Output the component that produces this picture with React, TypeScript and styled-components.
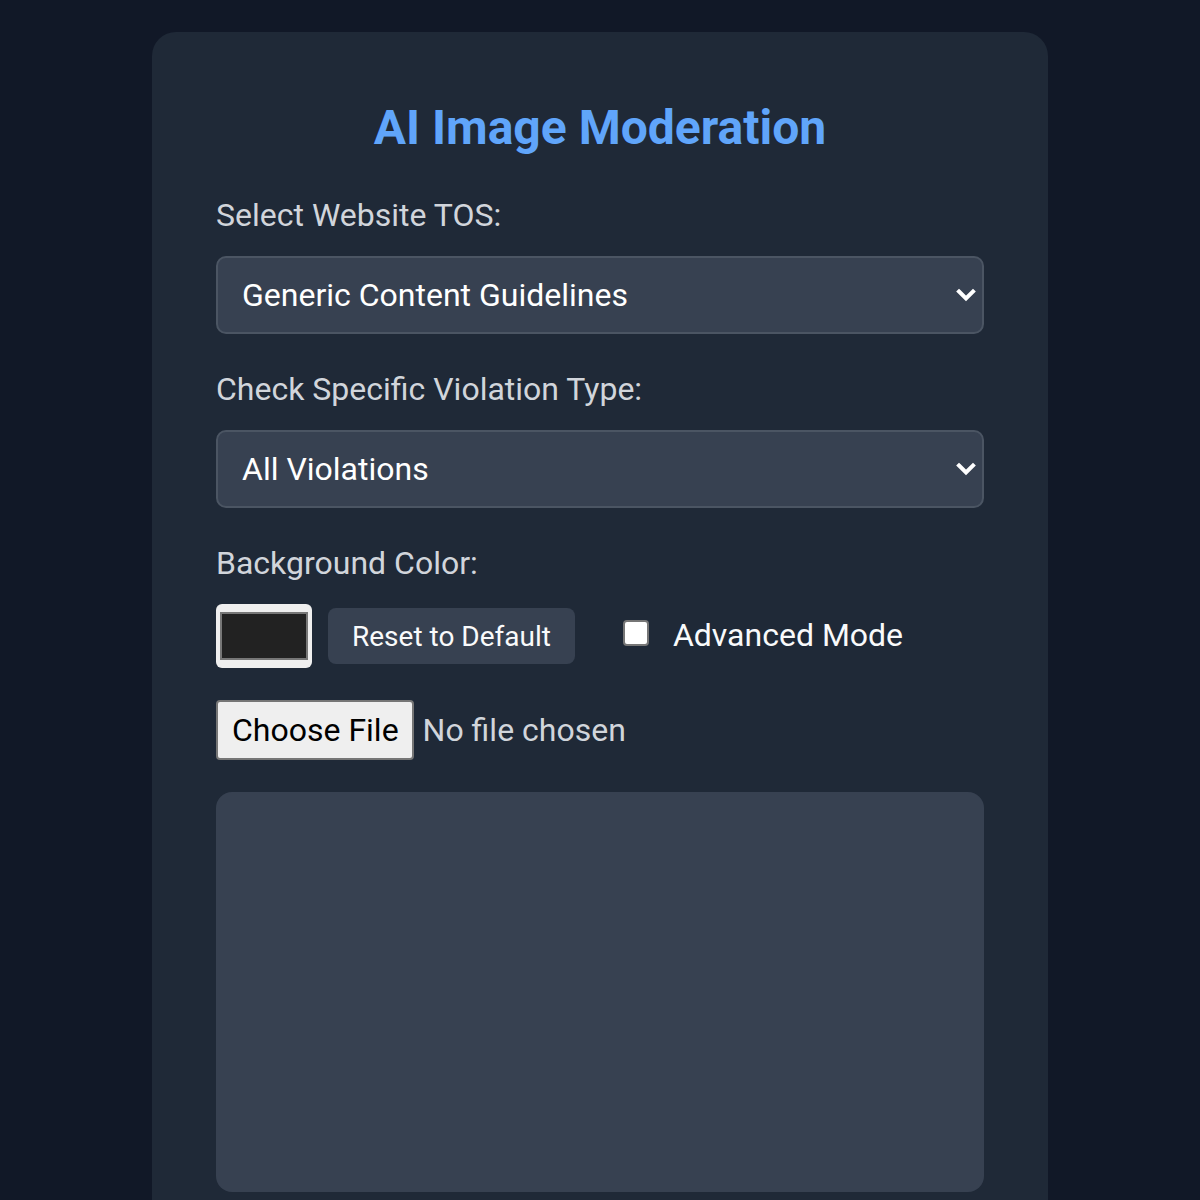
import React, { useState } from "react";
import styled, { createGlobalStyle } from "styled-components";

const GlobalStyle = createGlobalStyle`
  html, body {
    margin: 0;
    padding: 0;
    background: #111827;
  }
  body {
    font-family: Roboto, "Liberation Sans", Arial, sans-serif;
    -webkit-font-smoothing: antialiased;
  }
  *, *::before, *::after {
    box-sizing: border-box;
  }
`;

const Page = styled.main`
  min-height: 100vh;
  padding: 32px 0;
  display: flex;
  justify-content: center;
  align-items: flex-start;
  background: #111827;
`;

const Card = styled.section`
  width: 896px;
  background: #1f2937;
  border-radius: 24px;
  padding: 64px;
  display: flex;
  flex-direction: column;
`;

const Title = styled.h1`
  margin: 0 0 32px;
  font-size: 48px;
  line-height: 64px;
  font-weight: 700;
  color: #60a5fa;
  text-align: center;
`;

const Field = styled.div`
  display: flex;
  flex-direction: column;
  margin-bottom: 32px;
`;

const Label = styled.label`
  font-size: 32px;
  line-height: 48px;
  color: #d1d5db;
  margin: -1px 0 17px;
`;

const SelectWrap = styled.div`
  position: relative;
`;

const Select = styled.select`
  appearance: none;
  -webkit-appearance: none;
  width: 100%;
  height: 78px;
  padding: 0 64px 0 24px;
  background: #374151;
  border: 2px solid #4b5563;
  border-radius: 10px;
  color: #ffffff;
  font-family: inherit;
  font-size: 32px;
  outline: none;
`;

const Chevron = styled.svg`
  position: absolute;
  right: 8px;
  top: 50%;
  transform: translateY(-50%);
  pointer-events: none;
`;

const ControlRow = styled.div`
  display: flex;
  align-items: center;
  gap: 16px;
`;

const ColorInput = styled.input`
  -webkit-appearance: none;
  appearance: none;
  width: 96px;
  height: 64px;
  margin: 0;
  padding: 0;
  border: none;
  border-radius: 6px;
  background: #efefef;
  cursor: pointer;

  &::-webkit-color-swatch-wrapper {
    padding: 8px 4px;
  }
  &::-webkit-color-swatch {
    border: 2px solid #777777;
    border-radius: 0;
  }
`;

const ResetButton = styled.button`
  height: 56px;
  padding: 0 24px;
  border: none;
  border-radius: 8px;
  background: #374151;
  color: #f9fafb;
  font-family: inherit;
  font-size: 28px;
  cursor: pointer;
`;

const CheckLabel = styled.label`
  display: flex;
  align-items: center;
  gap: 24px;
  margin-left: 32px;
  font-size: 32px;
  line-height: 48px;
  color: #f9fafb;
  margin-bottom: 2px;
`;

const Checkbox = styled.input`
  -webkit-appearance: none;
  appearance: none;
  width: 26px;
  height: 26px;
  margin: 0 0 4px;
  border: 2px solid #767676;
  border-radius: 4px;
  background: #ffffff;
`;

const FileRow = styled.div`
  display: flex;
  align-items: center;
  gap: 9px;
  margin-bottom: 32px;
`;

const FileButton = styled.label`
  display: inline-flex;
  align-items: center;
  height: 60px;
  padding: 0 13px 0 14px;
  background: #efefef;
  border: 2px solid #767676;
  border-radius: 4px;
  color: #000000;
  font-size: 32px;
  cursor: pointer;
`;

const HiddenFile = styled.input`
  display: none;
`;

const FileName = styled.span`
  font-size: 32px;
  color: #d1d5db;
`;

const Preview = styled.div`
  height: 400px;
  border-radius: 16px;
  background: #374151;
`;

const ChevronIcon = () => (
  <Chevron width="20" height="14" viewBox="0 0 20 14" aria-hidden="true">
    <polyline
      points="3,3.5 10,10.5 17,3.5"
      fill="none"
      stroke="#ffffff"
      strokeWidth="4"
      strokeLinecap="square"
      strokeLinejoin="miter"
    />
  </Chevron>
);

export default function App() {
  const [tos, setTos] = useState("generic");
  const [violation, setViolation] = useState("all");
  const [color, setColor] = useState("#222222");
  const [advanced, setAdvanced] = useState(false);
  const [fileName, setFileName] = useState("No file chosen");

  return (
    <>
      <GlobalStyle />
      <Page>
        <Card>
          <Title>AI Image Moderation</Title>

          <Field>
            <Label htmlFor="tos">Select Website TOS:</Label>
            <SelectWrap>
              <Select id="tos" value={tos} onChange={(e) => setTos(e.target.value)}>
                <option value="generic">Generic Content Guidelines</option>
                <option value="social">Social Media Guidelines</option>
                <option value="marketplace">Marketplace Guidelines</option>
              </Select>
              <ChevronIcon />
            </SelectWrap>
          </Field>

          <Field>
            <Label htmlFor="violation">Check Specific Violation Type:</Label>
            <SelectWrap>
              <Select
                id="violation"
                value={violation}
                onChange={(e) => setViolation(e.target.value)}
              >
                <option value="all">All Violations</option>
                <option value="nudity">Nudity</option>
                <option value="violence">Violence</option>
                <option value="hate">Hate Symbols</option>
              </Select>
              <ChevronIcon />
            </SelectWrap>
          </Field>

          <Field>
            <Label htmlFor="bg">Background Color:</Label>
            <ControlRow>
              <ColorInput
                id="bg"
                type="color"
                value={color}
                onChange={(e) => setColor(e.target.value)}
              />
              <ResetButton type="button" onClick={() => setColor("#222222")}>
                Reset to Default
              </ResetButton>
              <CheckLabel>
                <Checkbox
                  type="checkbox"
                  checked={advanced}
                  onChange={(e) => setAdvanced(e.target.checked)}
                />
                Advanced Mode
              </CheckLabel>
            </ControlRow>
          </Field>

          <FileRow>
            <FileButton>
              Choose File
              <HiddenFile
                type="file"
                accept="image/*"
                onChange={(e) =>
                  setFileName(e.target.files?.[0]?.name ?? "No file chosen")
                }
              />
            </FileButton>
            <FileName>{fileName}</FileName>
          </FileRow>

          <Preview />
        </Card>
      </Page>
    </>
  );
}
